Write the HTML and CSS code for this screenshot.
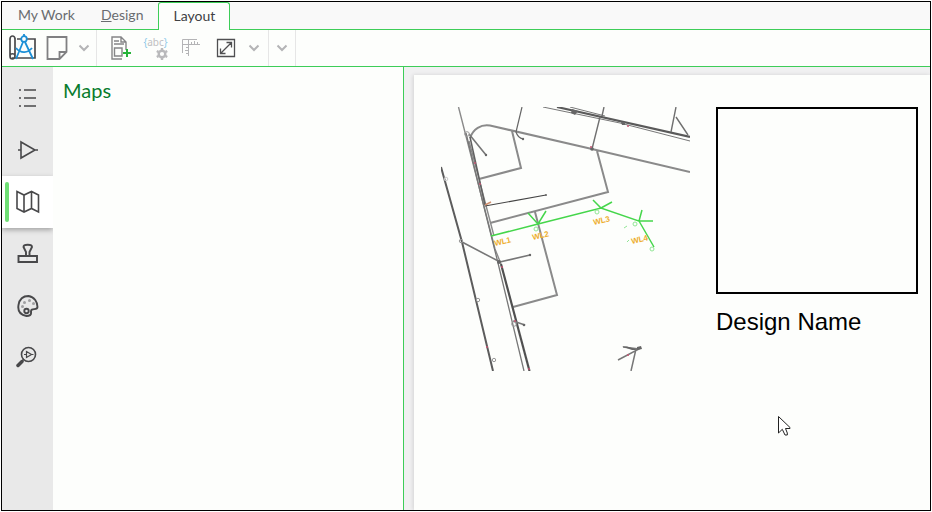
FILE: index.html
```html
<!DOCTYPE html>
<html lang="en">
<head>
<meta charset="utf-8">
<title>Layout</title>
<link rel="stylesheet" href="styles.css">
</head>
<body>
<div class="window">
  <nav class="tabs">
    <a class="tab" href="#work">My Work</a>
    <a class="tab" href="#design"><u>D</u>esign</a>
    <a class="tab tab-active" href="#layout">Layout</a>
  </nav>
  <div class="toolbar">
    <div class="group">
      <button class="tool" aria-label="Design plan">
        <svg width="28" height="28" viewBox="0 0 28 28" fill="none" stroke="#4a4a4c" stroke-width="1.7">
          <path d="M7 5C7 1 2 1 2 5V22C2 26 7 26 7 22V4M9 5H13M19 5H27V24H4M2 22C2 19 7 19 7 22"/>
          <g stroke="#1c8fd6" stroke-width="1.8"><circle cx="16" cy="5" r="2.8"/><path d="M16 0V2M15 8L8 25M17 8L25 25M8 14C13 20 20 19 24 14"/></g>
        </svg>
      </button>
      <button class="tool" aria-label="Page">
        <svg width="22" height="26" viewBox="0 0 22 26" fill="none" stroke="#808082" stroke-width="1.8"><path d="M1.5 2H20.5V17L13.5 24H1.5ZM13.5 24V17H20.5"/></svg>
      </button>
      <button class="chevron" aria-label="Page options"><svg width="12" height="8" viewBox="0 0 12 8"><path d="M1.5 1.5L6 6L10.5 1.5"/></svg></button>
    </div>
    <div class="group group-wide">
      <button class="tool" aria-label="Add report">
        <svg width="22" height="26" viewBox="0 0 22 26" fill="none" stroke="#858587" stroke-width="1.4">
          <path d="M16 15V7L11 2H2V24H12M11 2V7H16M4 6H9M4 9H14M4.5 13H12V21H4.5Z"/>
          <path stroke="#27b43a" stroke-width="2" d="M17 14V22M13 18H21"/>
        </svg>
      </button>
      <button class="tool tool-text" aria-label="Text settings">
        <span class="abc"><i>{</i>abc<i>}</i></span>
        <svg class="gear" width="12" height="12" viewBox="0 0 12 12" fill="none" stroke="#b9b9bb"><circle cx="6" cy="6" r="3.3" stroke-width="2.4"/><path stroke-width="2.4" d="M6 0V2M6 10V12M.8 3L2.5 4M9.5 8L11.2 9M.8 9L2.5 8M9.5 4L11.2 3"/></svg>
      </button>
      <button class="tool" aria-label="Rulers">
        <svg width="20" height="22" viewBox="0 0 20 22" fill="none" stroke="#b4b4b6"><path d="M1.5 16V2.5H16M1 7.5H19M7.5 2V19M10.5 7V5M13.5 7V4M16.5 7V5M7 10.5H5M7 13.5H4M7 16.5H5"/></svg>
      </button>
      <button class="tool" aria-label="Fit to page">
        <svg width="20" height="20" viewBox="0 0 20 20" fill="none" stroke="#4f4f51" stroke-width="1.3"><path d="M1.5 1.5H18.5V18.5H1.5ZM5 15L15 5M10.5 4.5H15.5V9.5M4.5 10.5V15.5H9.5"/></svg>
      </button>
      <button class="chevron" aria-label="Fit options"><svg width="12" height="8" viewBox="0 0 12 8"><path d="M1.5 1.5L6 6L10.5 1.5"/></svg></button>
    </div>
    <div class="group">
      <button class="chevron" aria-label="More tools"><svg width="12" height="8" viewBox="0 0 12 8"><path d="M1.5 1.5L6 6L10.5 1.5"/></svg></button>
    </div>
  </div>
  <div class="body">
    <nav class="rail">
      <button class="rail-item" aria-label="List">
        <svg width="24" height="24" viewBox="0 0 24 24"><path d="M3 4H5M8 4H20M3 12H5M8 12H20M3 20H5M8 20H20"/></svg>
      </button>
      <button class="rail-item" aria-label="Components">
        <svg width="24" height="24" viewBox="0 0 24 24"><path d="M5 4L19 12L5 20ZM2 12H5M19 12H22"/></svg>
      </button>
      <button class="rail-item rail-active" aria-label="Maps">
        <svg width="24" height="24" viewBox="0 0 24 24"><path d="M1 1.5L8 5L15.500 1.500L22.500 5V22L15.500 18.500L8 22L1 18.500ZM8 5V22M15.500 1.500V18.500"/></svg>
      </button>
      <button class="rail-item" aria-label="Stamps">
        <svg width="24" height="24" viewBox="0 0 24 24"><path stroke-width="1.9" d="M2.500 14H21V20H2.500ZM10 14V10L7.500 5C7.500 2 16 2 16 5L13.500 10V14"/></svg>
      </button>
      <button class="rail-item" aria-label="Styles">
        <svg width="24" height="24" viewBox="0 0 24 24"><path stroke-width="1.9" d="M21.500 13C21.500 17 14.500 13 15 18C15.500 21 13.500 22 10.500 22C4.500 21 1.500 17 2.500 11C3.500 5 7.500 2 12.500 2C18.500 3 21.500 8 21.500 13Z"/><circle cx="10.500" cy="17" r="2.200" stroke-width="1.9"/><g fill="#a0a0a2" stroke="none"><circle cx="6.500" cy="12.500" r="1.500"/><circle cx="8.500" cy="8.500" r="1.500"/><circle cx="13.500" cy="6.500" r="1.500"/><circle cx="17.500" cy="9.500" r="1.500"/></g></svg>
      </button>
      <button class="rail-item" aria-label="Find component">
        <svg width="24" height="24" viewBox="0 0 24 24"><circle cx="12.500" cy="8.500" r="7"/><path stroke-width="1.2" d="M10.500 5.500L15.500 8.500L10.500 11.500ZM8 8.500H10.500M15.500 8.500H17.500"/><path stroke-width="3.500" stroke-linecap="round" d="M2 19.500L6 15.500"/><path d="M5.500 15.500L8 13"/></svg>
      </button>
    </nav>
    <aside class="panel"><h1 class="panel-title">Maps</h1></aside>
    <main class="canvas">
      <div class="page">
        <svg class="map" width="249" height="264" viewBox="441 107 249 264" fill="none" role="img" aria-label="Site map">
          <g stroke="#8a8a8a" stroke-width="2">
            <path d="M470 138C473 129 481 124 490 125.500L592 149L690 172M512 131L521 168L479 179M597 151L608 192L490 223M535 212L557 295L513 307"/>
            <path d="M458.500 107L495 249L501 264M469 141L494 236" stroke-width="1.400"/>
          </g>
          <path d="M466 133L482 199L498 263L524 371" stroke="#777" stroke-width="1.300"/>
          <path d="M470 137L485 205" stroke="#606060" stroke-width="1.500"/>
          <path d="M501 264L529.500 371" stroke="#505050" stroke-width="2.200"/>
          <path d="M441 167L462 242L493 371" stroke="#5c5c5c" stroke-width="2"/>
          <path d="M557 107L690 137" stroke="#5a5a5a" stroke-width="2.200"/>
          <path d="M543 107L620 123L690 141M570 107L605 116" stroke="#777"/>
          <path d="M600 117L592 149M604 107L602 116M676 107L671 132M676 117L688 135" stroke="#707070" stroke-width="1.400"/>
          <path d="M522 107L516 132Q518 138 523 139" stroke="#666" stroke-width="1.200"/>
          <path d="M469 134L486 155M462 242L500 262L530 255M513 321L525 325" stroke="#777" stroke-width="1.600"/>
          <path d="M485 206L546 195" stroke="#444" stroke-width="1.200"/>
          <g fill="#666"><circle cx="523" cy="139" r="1.200"/><circle cx="592" cy="149" r="1.800"/><circle cx="546" cy="195" r="1"/><circle cx="486" cy="155" r="1.200"/><circle cx="530" cy="255" r="1.200"/><circle cx="524" cy="325" r="1.300"/><circle cx="499" cy="262" r="2"/><path d="M572 109L578 111L575 115L571 113ZM621 122H625V125H622Z"/></g>
          <g stroke="#999"><circle cx="467" cy="134" r="2.300"/><circle cx="461" cy="241" r="1.700"/><circle cx="478" cy="300" r="1.700"/><circle cx="494" cy="360" r="1.700"/><circle cx="514" cy="324" r="2.300"/></g>
          <circle cx="446" cy="179" r="1.800" stroke="#ccc"/>
          <g fill="#c35472"><circle cx="475" cy="163" r="1"/><circle cx="480" cy="184" r="1"/><circle cx="502" cy="267" r="1"/><circle cx="487" cy="347" r="1"/><circle cx="515" cy="321" r="1"/><circle cx="529" cy="369" r="1"/><circle cx="628" cy="126" r="1"/><circle cx="591" cy="147" r="1"/></g>
          <path d="M485 205L491 202" stroke="#d2906e" stroke-width="1.500"/>
          <g stroke="#45d64b" stroke-width="1.500">
            <path d="M491 236L538 224L601 208L639 221L654 247M528 213L538 224L546 211M593 200L601 208L612 202M642 210L639 221H653"/>
            <g stroke="#91e695" stroke-width="1"><circle cx="536" cy="229" r="2"/><circle cx="597" cy="212" r="2"/><circle cx="635" cy="224" r="2"/><circle cx="652" cy="249" r="2"/><path d="M624 228L627 226M627 242L629 240"/></g>
          </g>
          <g class="callouts" font-size="8">
            <text transform="translate(495 246) rotate(-13)">WL1</text>
            <text transform="translate(533 240) rotate(-13)">WL2</text>
            <text transform="translate(594 225) rotate(-13)">WL3</text>
            <text transform="translate(632 244) rotate(-13)">WL4</text>
          </g>
          <path d="M618 360L639 349L623 347M636 349L631 371" stroke="#777" stroke-width="1.500"/>
          <path d="M622 346.500H627L638 350H632ZM637 347L641 346L642 349L637 350Z" fill="#666"/>
          <circle cx="628" cy="355" r="1" fill="#c35472"/>
        </svg>
        <section class="title-block">
          <div class="frame"></div>
          <p class="design-name">Design Name</p>
        </section>
      </div>
    </main>
  </div>
</div>
<svg class="cursor" width="13" height="20" viewBox="0 0 13 20" aria-hidden="true"><path d="M.5 .5V17L4.300 13.300L7 19H9.300V17L7.500 12.500H12V11.500Z" fill="#fff" stroke="#222"/></svg>
</body>
</html>
```
FILE: styles.css
```css
* { box-sizing: border-box; }

body {
  margin: 0;
  height: 100vh;
  padding: 1px;
  background: #fff;
  font-family: "Noto Sans", "Open Sans", sans-serif;
}

button {
  border: 0;
  padding: 0;
  background: none;
  display: flex;
  align-items: center;
  justify-content: center;
}

.window {
  height: 100%;
  border: 1px solid #000;
  display: flex;
  flex-direction: column;
  overflow: hidden;
  background: #fdfefc;
}

.tabs {
  display: flex;
  height: 28px;
  padding-left: 1px;
  background: #f9f9f9;
  border-bottom: 1px solid #3dcd58;
}

.tab {
  padding: 0 15px;
  font-family: Lato, sans-serif;
  font-size: 14px;
  line-height: 26px;
  color: #6a6c70;
  text-decoration: none;
}

.tab:first-child { padding-right: 11px; }

.tab-active {
  height: 28px;
  padding: 0 14px;
  border: 1px solid #3dcd58;
  border-bottom: 0;
  border-radius: 3px 3px 0 0;
  background: #fdfefc;
  color: #404144;
}

.toolbar {
  display: flex;
  height: 37px;
  border-bottom: 1px solid #3dcd58;
}

.group {
  display: flex;
  padding: 0 2px;
  border-right: 1px solid #e6e6e6;
}

.group-wide { padding: 0 3px 0 6px; }
.group:last-child { padding: 0 3px; }
.tool { width: 35px; }
.chevron { width: 20px; }
.group-wide .chevron { width: 22px; }
.chevron path { fill: none; stroke: #b4b4b6; stroke-width: 2; }

.tool-text {
  flex-direction: column;
  align-items: center;
}

.abc {
  font-family: "Noto Sans", sans-serif;
  font-size: 10px;
  line-height: 11px;
  color: #c0c0c2;
}

.abc i { font-style: normal; color: #90caea; }
.gear { margin-left: 12px; }

.body {
  flex: 1;
  display: flex;
  min-height: 0;
}

.rail {
  width: 51px;
  padding-top: 5px;
  background: #e9e9e9;
}

.rail-item {
  width: 100%;
  height: 52px;
}

.rail-item svg {
  fill: none;
  stroke: #48484a;
  stroke-width: 1.6;
}

.rail-active {
  position: relative;
  background: #fff;
  box-shadow: 0 2px 5px rgba(0, 0, 0, .3);
  clip-path: inset(-8px 0);
}

.rail-active::before {
  content: "";
  position: absolute;
  left: 3px;
  top: 6px;
  bottom: 6px;
  width: 4px;
  border-radius: 2px;
  background: #6fdf75;
}

.panel {
  width: 351px;
  padding: 9px 10px;
  border-right: 1px solid #3dcd58;
}

.panel-title {
  margin: 0;
  font-family: Lato, sans-serif;
  font-size: 20px;
  line-height: 28px;
  font-weight: 400;
  color: #087c2c;
}

.canvas {
  flex: 1;
  display: flex;
  min-width: 0;
  padding: 8px 0 0 10px;
  background: #f0f0f1;
}

.page {
  flex: 1;
  display: flex;
  align-items: flex-start;
  gap: 26px;
  padding: 32px 12px 0 27px;
  background: #fdfefc;
  box-shadow: -1px 0 4px rgba(0, 0, 0, .12);
}

.map { flex: none; }

.callouts {
  fill: #edae2e;
  font-family: "Liberation Sans", sans-serif;
  font-weight: 700;
}

.title-block { flex: 1; }

.frame {
  height: 187px;
  border: 2px solid #000;
}

.design-name {
  margin: 14px 0 0;
  font-family: "Liberation Sans", sans-serif;
  font-size: 24px;
  line-height: 28px;
  color: #000;
}

.cursor {
  position: absolute;
  left: 778px;
  top: 416px;
}
```
